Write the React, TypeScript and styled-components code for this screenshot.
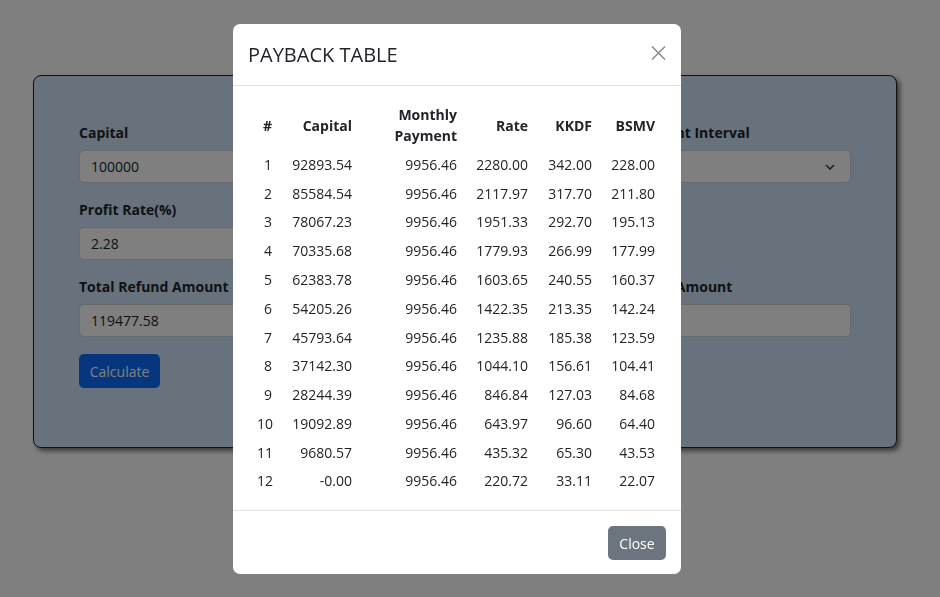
import React from "react";
import styled, { createGlobalStyle } from "styled-components";

const Global = createGlobalStyle`
  html, body { margin: 0; padding: 0; }
  body {
    background: #ffffff;
    font-family: "Segoe UI", "Open Sans", "Noto Sans", sans-serif;
    font-size: 14px;
    line-height: 1.5;
    color: #212529;
  }
  * { box-sizing: border-box; }
`;

const Page = styled.div`
  width: 940px;
  height: 597px;
  padding: 75px 0 0 33px;
  overflow: hidden;
`;

const Card = styled.div`
  width: 864px;
  height: 373px;
  background: #cee4f8;
  border: 1px solid #222;
  border-radius: 8px;
  box-shadow: 3px 3px 5px rgba(0, 0, 0, 0.55);
  padding: 46px 45px 0 45px;
`;

const FormGrid = styled.div`
  display: grid;
  grid-template-columns: repeat(3, 1fr);
  column-gap: 24px;
`;

const Group = styled.div`
  display: flex;
  flex-direction: column;
  margin-bottom: 16px;
`;

const Label = styled.label`
  font-weight: 700;
  line-height: 21px;
  margin-bottom: 7px;
  white-space: nowrap;
`;

const Input = styled.div`
  height: 33px;
  background: #ffffff;
  border: 1px solid #ced4da;
  border-radius: 5px;
  padding: 0 11px;
  display: flex;
  align-items: center;
  justify-content: space-between;
  color: #212529;
`;

const Chevron = styled.svg`
  width: 10px;
  height: 6px;
  margin-right: 4px;
`;

const PrimaryButton = styled.button`
  height: 34px;
  width: 81px;
  margin-top: 1px;
  background: #0d6efd;
  color: #ffffff;
  border: 0;
  border-radius: 5px;
  font: inherit;
  font-size: 14px;
  padding: 0;
`;

const Backdrop = styled.div`
  position: fixed;
  inset: 0;
  background: rgba(0, 0, 0, 0.5);
`;

const ModalWrap = styled.div`
  position: fixed;
  inset: 0;
  padding: 24px 0 0 233px;
`;

const Dialog = styled.div`
  width: 448px;
  height: 550px;
  background: #fff;
  border-radius: 7px;
  display: flex;
  flex-direction: column;
  overflow: hidden;
`;

const Header = styled.div`
  height: 62px;
  padding: 0 15px 0 15px;
  display: flex;
  align-items: center;
  justify-content: space-between;
  border-bottom: 1px solid #dee2e6;
`;

const Title = styled.h5`
  margin: 0;
  font-size: 20px;
  font-weight: 400;
  line-height: 30px;
  color: #212529;
`;

const CloseX = styled.button`
  width: 20px;
  height: 20px;
  border: 0;
  background: transparent;
  padding: 0;
  margin-right: -2px;
  margin-top: -4px;
  display: flex;
  align-items: center;
  justify-content: center;
`;

const Body = styled.div`
  flex: 1;
  padding: 14px 16px 0 16px;
`;

const Table = styled.table`
  border-collapse: collapse;
  table-layout: fixed;
  width: 414px;
`;

const Th = styled.th`
  font-weight: 700;
  text-align: right;
  vertical-align: middle;
  line-height: 21px;
  padding: 4px 8px;
`;

const Td = styled.td`
  text-align: right;
  line-height: 21px;
  padding: 3.9px 8px;
  white-space: nowrap;
`;

const Footer = styled.div`
  height: 64px;
  border-top: 1px solid #dee2e6;
  display: flex;
  justify-content: flex-end;
  align-items: flex-start;
  padding: 15px 15px 0 0;
`;

const SecondaryButton = styled.button`
  height: 34px;
  width: 58px;
  background: #6c757d;
  color: #fff;
  border: 0;
  border-radius: 5px;
  font: inherit;
  font-size: 14px;
  padding: 0;
`;

const cols = [31, 80, 105, 71, 64, 63];

const rows: string[][] = [
  ["1", "92893.54", "9956.46", "2280.00", "342.00", "228.00"],
  ["2", "85584.54", "9956.46", "2117.97", "317.70", "211.80"],
  ["3", "78067.23", "9956.46", "1951.33", "292.70", "195.13"],
  ["4", "70335.68", "9956.46", "1779.93", "266.99", "177.99"],
  ["5", "62383.78", "9956.46", "1603.65", "240.55", "160.37"],
  ["6", "54205.26", "9956.46", "1422.35", "213.35", "142.24"],
  ["7", "45793.64", "9956.46", "1235.88", "185.38", "123.59"],
  ["8", "37142.30", "9956.46", "1044.10", "156.61", "104.41"],
  ["9", "28244.39", "9956.46", "846.84", "127.03", "84.68"],
  ["10", "19092.89", "9956.46", "643.97", "96.60", "64.40"],
  ["11", "9680.57", "9956.46", "435.32", "65.30", "43.53"],
  ["12", "-0.00", "9956.46", "220.72", "33.11", "22.07"],
];

export default function App() {
  return (
    <>
      <Global />
      <Page>
        <Card>
          <FormGrid>
            <Group>
              <Label>Capital</Label>
              <Input>100000</Input>
            </Group>
            <Group>
              <Label>Term (Months)</Label>
              <Input>12</Input>
            </Group>
            <Group>
              <Label>Installment Interval</Label>
              <Input>
                Monthly
                <Chevron viewBox="0 0 10 6">
                  <path d="M1 1l4 4 4-4" fill="none" stroke="#343a40" strokeWidth="1.5" />
                </Chevron>
              </Input>
            </Group>
            <Group>
              <Label>Profit Rate(%)</Label>
              <Input>2.28</Input>
            </Group>
            <Group>
              <Label>Tax Rate(%)</Label>
              <Input>15</Input>
            </Group>
            <Group />
            <Group>
              <Label>Total Refund Amount</Label>
              <Input>119477.58</Input>
            </Group>
            <Group>
              <Label>Total Profit</Label>
              <Input>19477.58</Input>
            </Group>
            <Group>
              <Label>Payment Amount</Label>
              <Input>9956.46</Input>
            </Group>
          </FormGrid>
          <PrimaryButton>Calculate</PrimaryButton>
        </Card>
      </Page>
      <Backdrop />
      <ModalWrap>
        <Dialog>
          <Header>
            <Title>PAYBACK TABLE</Title>
            <CloseX aria-label="Close">
              <svg width="15" height="14" viewBox="0 0 15 14">
                <path d="M1 0.5l13 13M14 0.5l-13 13" stroke="#8a8a8a" strokeWidth="1.5" />
              </svg>
            </CloseX>
          </Header>
          <Body>
            <Table>
              <colgroup>
                {cols.map((w, i) => (
                  <col key={i} style={{ width: w }} />
                ))}
              </colgroup>
              <thead>
                <tr>
                  <Th>#</Th>
                  <Th>Capital</Th>
                  <Th>
                    Monthly
                    <br />
                    Payment
                  </Th>
                  <Th>Rate</Th>
                  <Th>KKDF</Th>
                  <Th>BSMV</Th>
                </tr>
              </thead>
              <tbody>
                {rows.map((r) => (
                  <tr key={r[0]}>
                    {r.map((c, i) => (
                      <Td key={i}>{c}</Td>
                    ))}
                  </tr>
                ))}
              </tbody>
            </Table>
          </Body>
          <Footer>
            <SecondaryButton>Close</SecondaryButton>
          </Footer>
        </Dialog>
      </ModalWrap>
    </>
  );
}
